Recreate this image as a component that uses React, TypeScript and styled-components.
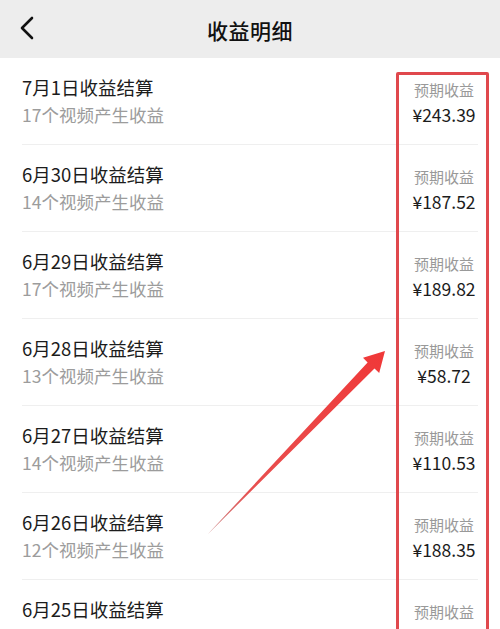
import * as React from "react";
import styled, { createGlobalStyle } from "styled-components";

const GlobalStyle = createGlobalStyle`
  html, body {
    margin: 0;
    padding: 0;
    background: #ffffff;
  }
  body {
    font-family: "Noto Sans CJK SC", "Noto Sans", sans-serif;
  }
`;

interface IRecord {
  date: string;
  videos?: number;
  amount?: string;
}

// last row is only partly on screen
const records: IRecord[] = [
  { date: "7月1日", videos: 17, amount: "243.39" },
  { date: "6月30日", videos: 14, amount: "187.52" },
  { date: "6月29日", videos: 17, amount: "189.82" },
  { date: "6月28日", videos: 13, amount: "58.72" },
  { date: "6月27日", videos: 14, amount: "110.53" },
  { date: "6月26日", videos: 12, amount: "188.35" },
  { date: "6月25日" }
];

const App = () => (
  <Page>
    <GlobalStyle />
    <Header>
      <BackButton aria-label="返回">
        <svg width="16" height="24" viewBox="0 0 16 24">
          <polyline
            points="12,2 2,12 12,22"
            fill="none"
            stroke="#111"
            strokeWidth="2.6"
            strokeLinecap="round"
            strokeLinejoin="round"
          />
        </svg>
      </BackButton>
      <Title>收益明细</Title>
    </Header>

    <List>
      {records.map(r => (
        <Row key={r.date}>
          <LeftCol>
            <RowTitle>{r.date}收益结算</RowTitle>
            {r.videos !== undefined && <RowSub>{r.videos}个视频产生收益</RowSub>}
          </LeftCol>
          <RightCol>
            <Label>预期收益</Label>
            {r.amount && <Amount>¥{r.amount}</Amount>}
          </RightCol>
        </Row>
      ))}
    </List>

    {/* annotation overlay */}
    <Highlight />
    <Arrow width="500" height="629" viewBox="0 0 500 629">
      <defs>
        <linearGradient id="arrowFade" x1="207" y1="535" x2="385" y2="351" gradientUnits="userSpaceOnUse">
          <stop offset="0" stopColor="#c98080" />
          <stop offset="0.25" stopColor="#e85050" />
          <stop offset="1" stopColor="#f03838" />
        </linearGradient>
      </defs>
      <polygon
        points="207,535 367.6,362.6 363,357.8 385,351 379.2,373 374.5,368.4"
        fill="url(#arrowFade)"
      />
    </Arrow>
  </Page>
);

const Page = styled.div`
  position: relative;
  width: 500px;
  height: 629px;
  overflow: hidden;
  background: #ffffff;
`;

const Header = styled.div`
  position: relative;
  height: 58px;
  display: flex;
  align-items: center;
  justify-content: center;
  background: #ededed;
`;

const BackButton = styled.button`
  position: absolute;
  left: 20px;
  top: 16px;
  padding: 0;
  border: none;
  background: transparent;
  display: flex;
`;

const Title = styled.div`
  font-size: 21px;
  font-weight: 500;
  color: #111;
  letter-spacing: 0.5px;
  margin-top: 1px;
`;

const List = styled.div`
  display: flex;
  flex-direction: column;
`;

const Row = styled.div`
  display: flex;
  justify-content: space-between;
  height: 86px;
  margin: 0 22px;
  border-bottom: 1px solid #efefef;
`;

const LeftCol = styled.div`
  display: flex;
  flex-direction: column;
  padding-top: 16px;
`;

const RowTitle = styled.div`
  font-size: 18.5px;
  line-height: 26px;
  color: #1c1c1c;
`;

const RowSub = styled.div`
  margin-top: 2px;
  font-size: 17.5px;
  line-height: 26px;
  color: #9c9c9c;
`;

const RightCol = styled.div`
  width: 92px;
  margin-right: -12px;
  display: flex;
  flex-direction: column;
  align-items: center;
  padding-top: 21px;
`;

const Label = styled.div`
  font-size: 15px;
  line-height: 22px;
  color: #999;
`;

const Amount = styled.div`
  margin-top: 2px;
  font-size: 17.5px;
  line-height: 24px;
  color: #1c1c1c;
`;

const Highlight = styled.div`
  position: absolute;
  left: 396px;
  top: 72px;
  width: 87px;
  height: 600px;
  border: 3px solid #e0484d;
  border-radius: 2px;
  pointer-events: none;
`;

const Arrow = styled.svg`
  position: absolute;
  left: 0;
  top: 0;
  pointer-events: none;
`;

export default App;
